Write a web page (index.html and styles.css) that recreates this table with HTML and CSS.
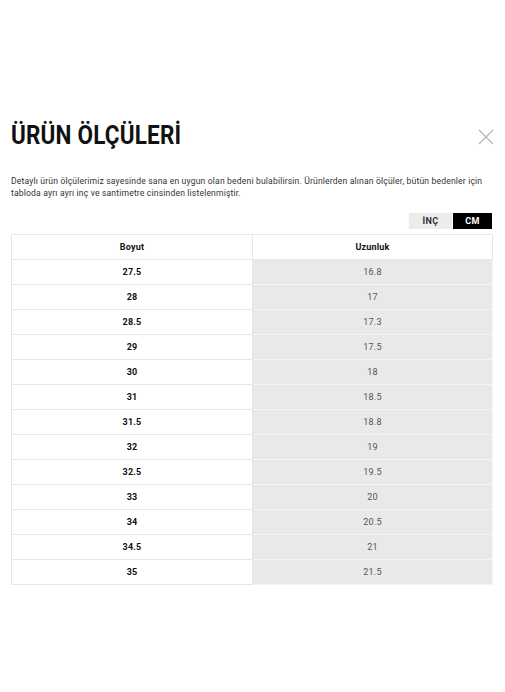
FILE: index.html
```html
<!DOCTYPE html>
<html lang="tr">
<head>
<meta charset="utf-8">
<link rel="stylesheet" href="styles.css">
</head>
<body>
<div class="modal">
  <div class="head">
    <h1 class="title">ÜRÜN ÖLÇÜLERİ</h1>
    <svg class="close" width="16" height="16" viewBox="0 0 16 16"><path d="M1 1L15 15M15 1L1 15" stroke="#b5b5b5" stroke-width="1.2" fill="none"/></svg>
  </div>
  <p class="desc">Detaylı ürün ölçülerimiz sayesinde sana en uygun olan bedeni bulabilirsin. Ürünlerden alınan ölçüler, bütün bedenler için tabloda ayrı ayrı inç ve santimetre cinsinden listelenmiştir.</p>
  <div class="units">
    <span class="unit">İNÇ</span>
    <span class="unit active">CM</span>
  </div>
  <table class="sizes">
    <thead>
      <tr><th>Boyut</th><th>Uzunluk</th></tr>
    </thead>
    <tbody>
      <tr><td>27.5</td><td>16.8</td></tr>
      <tr><td>28</td><td>17</td></tr>
      <tr><td>28.5</td><td>17.3</td></tr>
      <tr><td>29</td><td>17.5</td></tr>
      <tr><td>30</td><td>18</td></tr>
      <tr><td>31</td><td>18.5</td></tr>
      <tr><td>31.5</td><td>18.8</td></tr>
      <tr><td>32</td><td>19</td></tr>
      <tr><td>32.5</td><td>19.5</td></tr>
      <tr><td>33</td><td>20</td></tr>
      <tr><td>34</td><td>20.5</td></tr>
      <tr><td>34.5</td><td>21</td></tr>
      <tr><td>35</td><td>21.5</td></tr>
    </tbody>
  </table>
</div>
</body>
</html>
```
FILE: styles.css
```css
html, body {
  margin: 0;
  padding: 0;
  background: #fff;
}
body {
  font-family: "Roboto", "Liberation Sans", sans-serif;
  color: #111;
}
.modal {
  padding: 120px 12px 0 11px;
}
.head {
  display: flex;
  justify-content: space-between;
  align-items: center;
}
.title {
  margin: 0;
  font-size: 25px;
  font-weight: 700;
  line-height: 32px;
  letter-spacing: 0.2px;
  color: #111;
  transform: scaleX(0.9);
  transform-origin: left center;
}
.close {
  margin-right: -1px;
  margin-top: 2px;
}
.desc {
  margin: 23px 0 0;
  font-size: 8.6px;
  line-height: 12px;
  letter-spacing: 0.16px;
  color: #333;
}
.units {
  display: flex;
  justify-content: flex-end;
  gap: 1px;
  margin-top: 14px;
  margin-right: 1px;
}
.unit {
  display: flex;
  align-items: center;
  justify-content: center;
  height: 16px;
  font-size: 9px;
  font-weight: 700;
  letter-spacing: 0.3px;
  color: #333;
  background: #ececec;
  width: 43px;
}
.unit.active {
  background: #000;
  color: #fff;
  width: 39px;
}
.sizes {
  margin-top: 5px;
  width: 482px;
  border-collapse: collapse;
  table-layout: fixed;
  font-size: 9px;
  letter-spacing: 0.2px;
}
.sizes th, .sizes td {
  border: 1px solid #e6e6e6;
  height: 24px;
  padding: 0;
  text-align: center;
  vertical-align: middle;
}
.sizes th {
  font-weight: 700;
  color: #111;
  background: #fff;
}
.sizes th:first-child, .sizes td:first-child {
  width: 240px;
}
.sizes td:first-child {
  font-weight: 700;
  color: #111;
}
.sizes td:last-child {
  background: #e9e9e9;
  color: #555;
  border-color: #f4f4f4;
}
```
